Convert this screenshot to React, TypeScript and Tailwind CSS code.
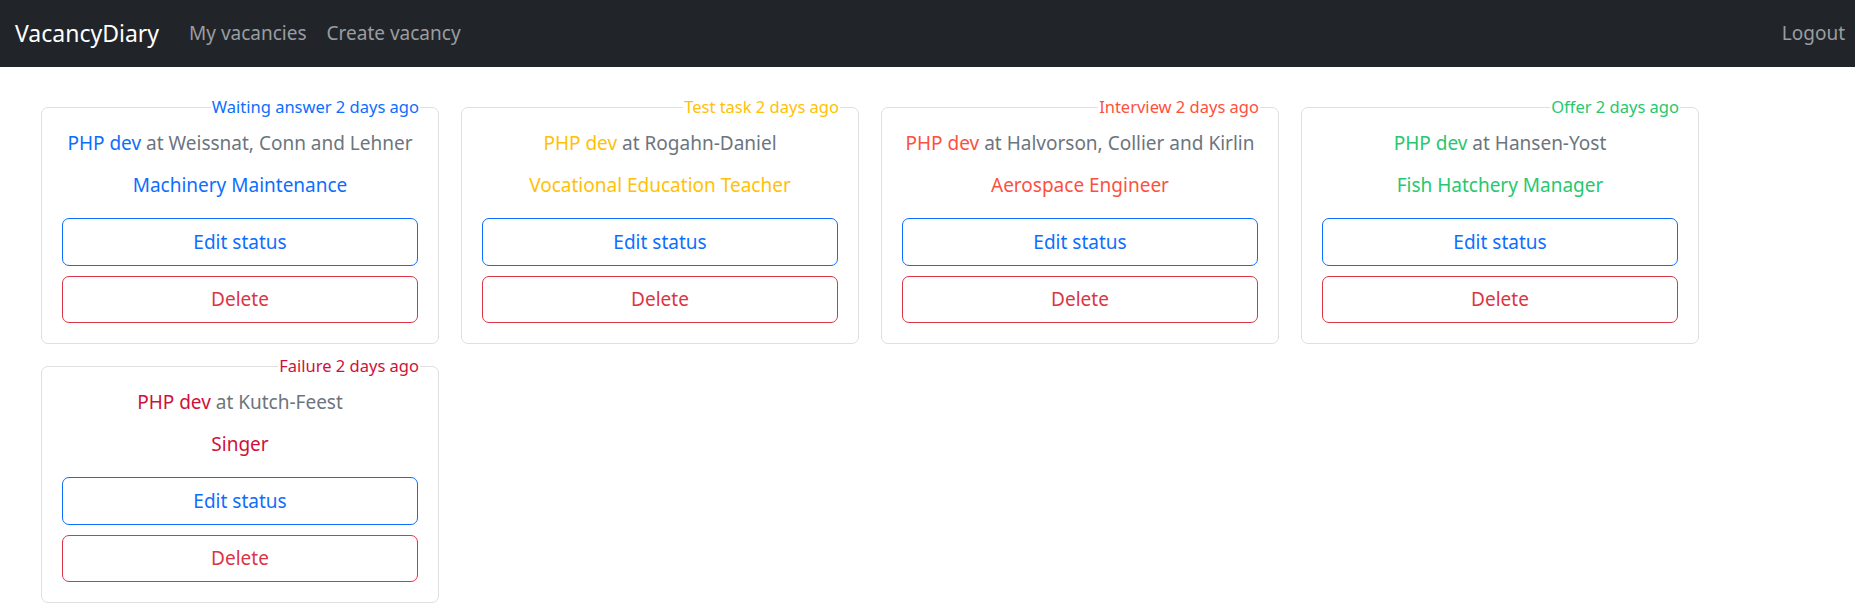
import { useState } from 'react';

type Vacancy = {
  id: number;
  status: string;
  position: string;
  company: string;
  title: string;
  color: string;
};

const vacancies: Vacancy[] = [
  { id: 1, status: 'Waiting answer', position: 'PHP dev', company: 'Weissnat, Conn and Lehner', title: 'Machinery Maintenance', color: 'text-[#0d6efd]' },
  { id: 2, status: 'Test task', position: 'PHP dev', company: 'Rogahn-Daniel', title: 'Vocational Education Teacher', color: 'text-[#ffc107]' },
  { id: 3, status: 'Interview', position: 'PHP dev', company: 'Halvorson, Collier and Kirlin', title: 'Aerospace Engineer', color: 'text-[#fd5140]' },
  { id: 4, status: 'Offer', position: 'PHP dev', company: 'Hansen-Yost', title: 'Fish Hatchery Manager', color: 'text-[#28c76f]' },
  { id: 5, status: 'Failure', position: 'PHP dev', company: 'Kutch-Feest', title: 'Singer', color: 'text-[#d0103a]' },
];

function VacancyCard({ vacancy }: { vacancy: Vacancy }) {
  return (
    <div className="relative w-[398px] rounded-[7px] border border-[#dfdfdf] bg-white px-5 pt-5 pb-5">
      {/* status sits on the top border */}
      <span className={`absolute right-[18px] top-[-13px] bg-white px-px text-[16.5px] leading-[24px] ${vacancy.color}`}>
        {vacancy.status} 2 days ago
      </span>
      <p className="text-center text-[19px] leading-[30px] text-[#6c757d]">
        <span className={vacancy.color}>{vacancy.position}</span> at {vacancy.company}
      </p>
      <p className={`mt-3 text-center text-[19px] leading-[30px] ${vacancy.color}`}>{vacancy.title}</p>
      <div className="mt-[18px] flex flex-col gap-[10px]">
        <button className="h-[48px] w-full rounded-[7px] border border-[#0d6efd] text-[19px] text-[#0d6efd]">Edit status</button>
        <button className="h-[47px] w-full rounded-[7px] border border-[#dc3545] text-[19px] text-[#dc3545]">Delete</button>
      </div>
    </div>
  );
}

export default function App() {
  const [items] = useState(vacancies);

  return (
    <div className="min-h-screen bg-white font-['Noto_Sans',sans-serif]">
      <nav className="flex h-[67px] items-center justify-between bg-[#212529] pl-[15px] pr-[10px]">
        <div className="flex items-center">
          <span className="text-[23px] text-white">VacancyDiary</span>
          <a className="ml-[30px] text-[19px] text-[#9a9da0]">My vacancies</a>
          <a className="ml-[20px] text-[19px] text-[#9a9da0]">Create vacancy</a>
        </div>
        <a className="text-[19px] text-[#9a9da0]">Logout</a>
      </nav>
      <main className="flex flex-wrap gap-[22px] pt-10 pl-[41px]">
        {items.map((v) => (
          <VacancyCard key={v.id} vacancy={v} />
        ))}
      </main>
    </div>
  );
}
